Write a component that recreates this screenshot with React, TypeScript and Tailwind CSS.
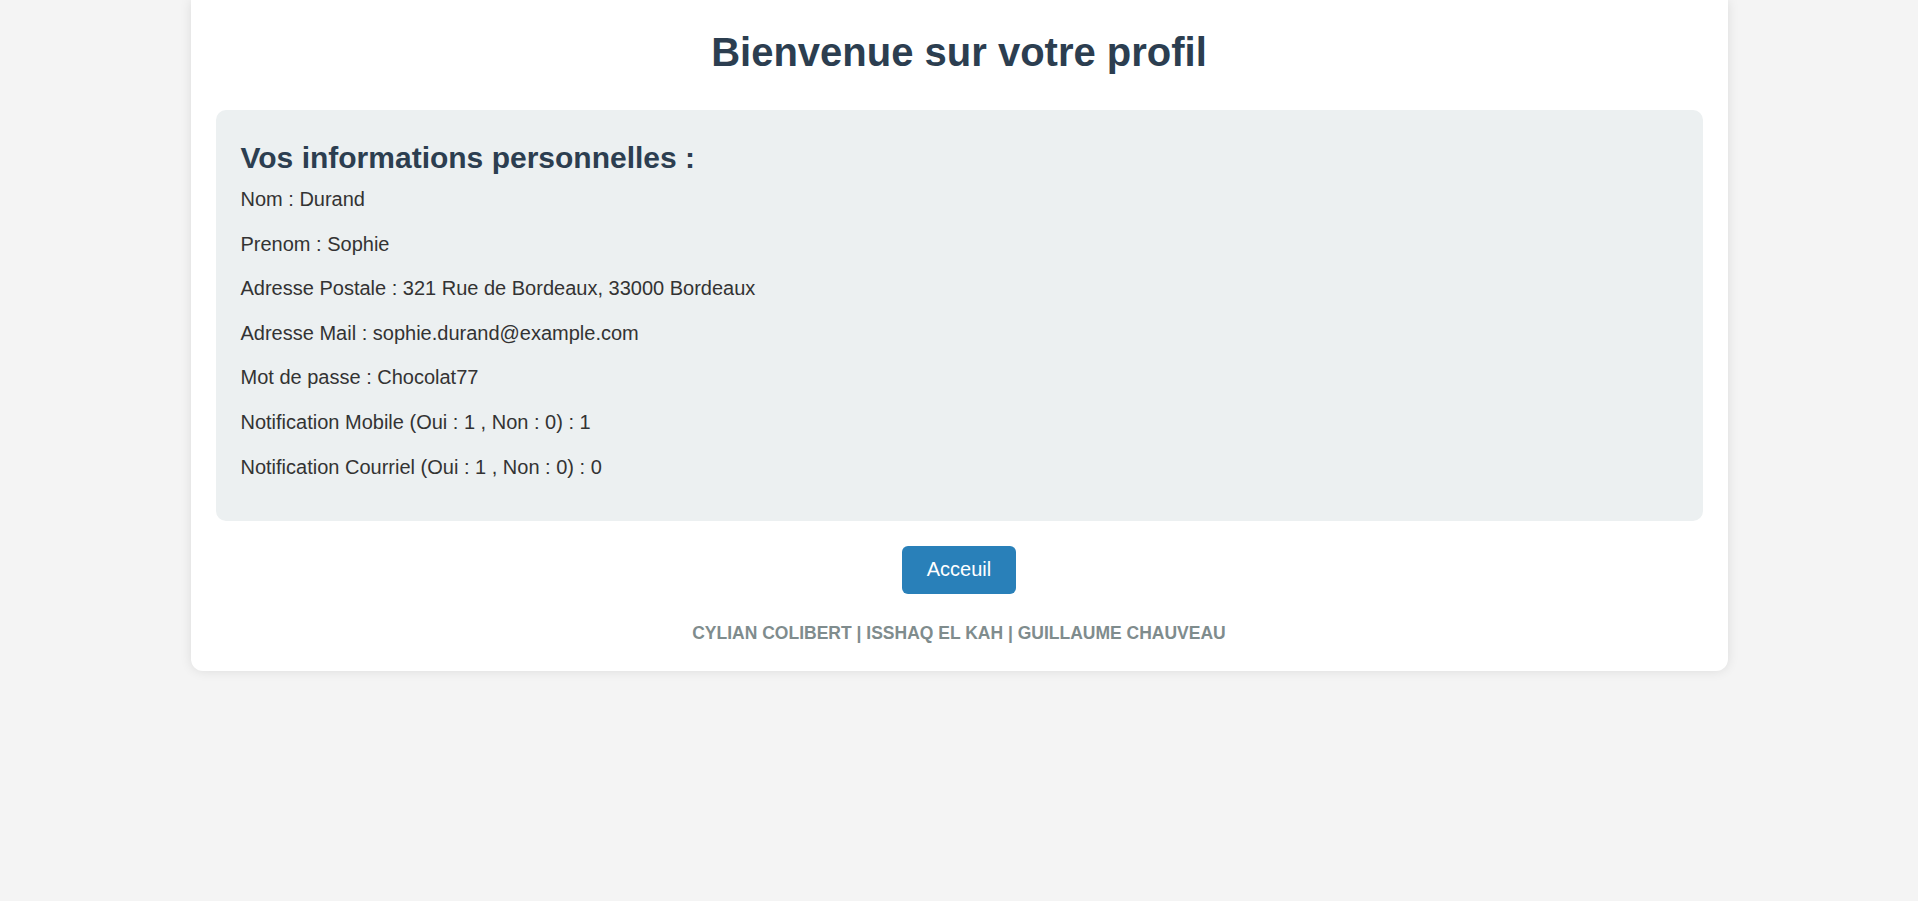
const infos = [
  "Nom : Durand",
  "Prenom : Sophie",
  "Adresse Postale : 321 Rue de Bordeaux, 33000 Bordeaux",
  "Adresse Mail : sophie.durand@example.com",
  "Mot de passe : Chocolat77",
  "Notification Mobile (Oui : 1 , Non : 0) : 1",
  "Notification Courriel (Oui : 1 , Non : 0) : 0",
];

export default function App() {
  return (
    <div className="min-h-screen bg-[#f4f4f4] font-['Liberation_Sans',Arial,sans-serif]">
      <div className="mx-auto w-[1537px] rounded-b-[12px] bg-white px-[25px] pt-[29px] pb-[28px] shadow-[0_0_12px_rgba(0,0,0,0.1)]">
        <h1 className="text-center text-[40px] font-bold leading-[46px] text-[#2c3e50]">Bienvenue sur votre profil</h1>

        <section className="mt-[35px] rounded-[10px] bg-[#ecf0f1] px-[25px] pt-[31px] pb-[42px]">
          <h2 className="text-[30px] font-bold leading-[34px] text-[#2c3e50]">Vos informations personnelles :</h2>
          <div className="mt-[12px] flex flex-col gap-[20.2px] text-[20px] leading-[24.4px] text-[#333]">
            {infos.map((line) => (
              <p key={line}>{line}</p>
            ))}
          </div>
        </section>

        <div className="mt-[25px] flex justify-center">
          <button type="button" className="rounded-[6px] bg-[#2980b9] px-[25px] py-[12.5px] text-[20px] leading-[23px] text-white">Acceuil</button>
        </div>

        <p className="mt-[29px] text-center text-[17.5px] font-bold leading-[20px] text-[#7f8c8d]">CYLIAN COLIBERT | ISSHAQ EL KAH | GUILLAUME CHAUVEAU</p>
      </div>
    </div>
  );
}
